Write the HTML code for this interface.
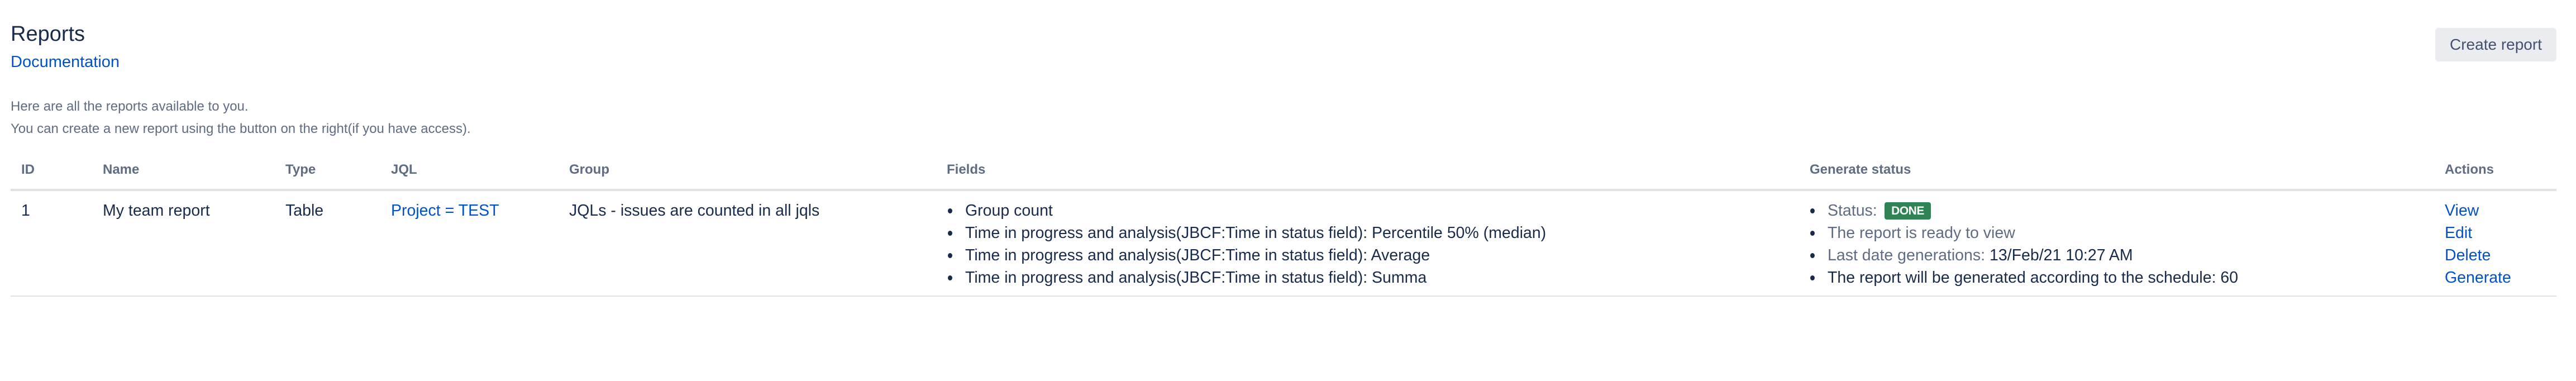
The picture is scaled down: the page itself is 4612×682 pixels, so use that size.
<!DOCTYPE html>
<html><head><meta charset="utf-8"><style>
html,body{margin:0;padding:0;background:#fff;}
body{width:4612px;height:682px;position:relative;overflow:hidden;font-family:"Liberation Sans",Arial,sans-serif;color:#172b4d;}
.a{position:absolute;white-space:nowrap;line-height:1;}
.h{font-size:24px;font-weight:bold;color:#5e6c84;top:292px;}
.r{font-size:28.5px;}
.l{color:#0052cc;}
.g{color:#5e6c84;}
.b{position:absolute;width:8px;height:9px;border-radius:50%;background:#172b4d;}
</style></head><body>
<div class="a" style="left:19px;top:42px;font-size:38px;">Reports</div>
<div class="a l" style="left:19px;top:97px;font-size:29px;">Documentation</div>
<div class="a g" style="left:19px;top:179px;font-size:24px;">Here are all the reports available to you.</div>
<div class="a g" style="left:19px;top:219px;font-size:24px;">You can create a new report using the button on the right(if you have access).</div>
<div style="position:absolute;left:4360px;top:50px;width:217px;height:60px;background:#ebecf0;border-radius:6px;"></div>
<div class="a" style="left:4360px;top:66px;width:217px;text-align:center;font-size:28px;color:#42526e;">Create report</div>

<div class="a h" style="left:38px;">ID</div>
<div class="a h" style="left:184px;">Name</div>
<div class="a h" style="left:511px;">Type</div>
<div class="a h" style="left:700px;">JQL</div>
<div class="a h" style="left:1019px;">Group</div>
<div class="a h" style="left:1695px;">Fields</div>
<div class="a h" style="left:3240px;">Generate status</div>
<div class="a h" style="left:4377px;">Actions</div>
<div style="position:absolute;left:19px;top:338px;width:4558px;height:4px;background:#dfe1e6;"></div>

<div class="a r" style="left:38px;top:363px;">1</div>
<div class="a r" style="left:184px;top:363px;">My team report</div>
<div class="a r" style="left:511px;top:363px;">Table</div>
<div class="a r l" style="left:700px;top:363px;">Project = TEST</div>
<div class="a r" style="left:1019px;top:363px;">JQLs - issues are counted in all jqls</div>

<div class="b" style="left:1697px;top:373px;"></div>
<div class="b" style="left:1697px;top:413px;"></div>
<div class="b" style="left:1697px;top:453px;"></div>
<div class="b" style="left:1697px;top:493px;"></div>
<div class="a r" style="left:1728px;top:363px;">Group count</div>
<div class="a r" style="left:1728px;top:403px;">Time in progress and analysis(JBCF:Time in status field): Percentile 50% (median)</div>
<div class="a r" style="left:1728px;top:443px;">Time in progress and analysis(JBCF:Time in status field): Average</div>
<div class="a r" style="left:1728px;top:483px;">Time in progress and analysis(JBCF:Time in status field): Summa</div>

<div class="b" style="left:3241px;top:373px;"></div>
<div class="b" style="left:3241px;top:413px;"></div>
<div class="b" style="left:3241px;top:453px;"></div>
<div class="b" style="left:3241px;top:493px;"></div>
<div class="a r g" style="left:3272px;top:363px;">Status:</div>
<div style="position:absolute;left:3374px;top:362px;width:83px;height:31px;background:#2f8254;border-radius:4px;color:#fff;font-weight:bold;font-size:21px;line-height:31px;text-align:center;letter-spacing:-0.5px;">DONE</div>
<div class="a r g" style="left:3272px;top:403px;">The report is ready to view</div>
<div class="a r" style="left:3272px;top:443px;"><span class="g">Last date generations:</span> 13/Feb/21 10:27 AM</div>
<div class="a r" style="left:3272px;top:483px;">The report will be generated according to the schedule: 60</div>

<div class="a r l" style="left:4377px;top:363px;">View</div>
<div class="a r l" style="left:4377px;top:403px;">Edit</div>
<div class="a r l" style="left:4377px;top:443px;">Delete</div>
<div class="a r l" style="left:4377px;top:483px;">Generate</div>
<div style="position:absolute;left:19px;top:529px;width:4558px;height:2px;background:#dfe1e6;"></div>
</body></html>
